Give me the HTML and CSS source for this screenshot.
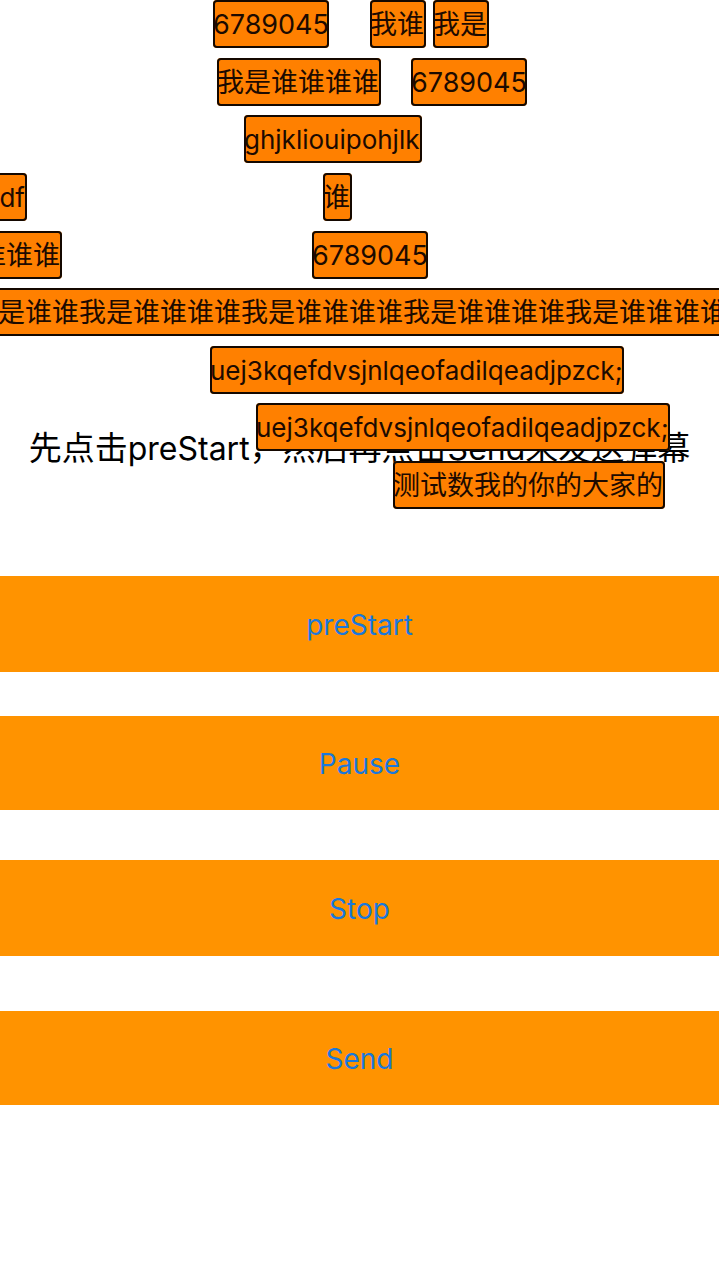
FILE: index.html
```html
<!DOCTYPE html>
<html lang="zh-CN">
<head>
<meta charset="utf-8">
<meta name="viewport" content="width=device-width, initial-scale=1">
<title>弹幕</title>
<link rel="stylesheet" href="styles.css">
</head>
<body>
<main class="screen">
  <section class="stage">
    <p class="hint">先点击<span class="hint-name">preStart</span>，然后再点击<span class="hint-name">Send</span>来发送弹幕</p>
    <div class="tracks">
      <div class="track">
        <span class="bullet" style="left: 213px">6789045</span>
        <span class="bullet bullet-han" style="left: 370px">我谁</span>
        <span class="bullet bullet-han" style="left: 433px">我是</span>
      </div>
      <div class="track">
        <span class="bullet bullet-han" style="left: 217px">我是谁谁谁谁</span>
        <span class="bullet" style="left: 411px">6789045</span>
      </div>
      <div class="track">
        <span class="bullet bullet-latin" style="left: 244px">ghjkliouipohjlk</span>
      </div>
      <div class="track">
        <span class="bullet bullet-latin" style="right: calc(100% - 27px)">asdf</span>
        <span class="bullet bullet-han" style="left: 323px">谁</span>
      </div>
      <div class="track">
        <span class="bullet bullet-han" style="right: calc(100% - 62px)">我是谁谁谁谁</span>
        <span class="bullet" style="left: 312px">6789045</span>
      </div>
      <div class="track">
        <span class="bullet bullet-han" style="left: -29px">我是谁谁我是谁谁谁谁我是谁谁谁谁我是谁谁谁谁我是谁谁谁谁我是谁谁谁谁</span>
      </div>
      <div class="track">
        <span class="bullet bullet-latin" style="left: 210px">uej3kqefdvsjnlqeofadilqeadjpzck;</span>
      </div>
      <div class="track">
        <span class="bullet bullet-latin" style="left: 256px">uej3kqefdvsjnlqeofadilqeadjpzck;</span>
      </div>
      <div class="track">
        <span class="bullet bullet-han" style="left: 393px">测试数我的你的大家的</span>
      </div>
    </div>
  </section>
  <div class="controls">
    <button class="control control-tall" type="button">preStart</button>
    <button class="control" type="button">Pause</button>
    <button class="control control-tall" type="button">Stop</button>
    <button class="control" type="button">Send</button>
  </div>
</main>
</body>
</html>
```

FILE: styles.css
```css
* {
  box-sizing: border-box;
}

body {
  margin: 0;
  background: #fff;
  color: #000;
  font-family: Inter, "Noto Sans CJK SC", sans-serif;
}

.screen {
  min-height: 100vh;
  overflow: hidden;
}

.stage {
  display: grid;
  grid-template-columns: 100%;
  padding-bottom: 67px;
}

.hint,
.tracks {
  grid-area: 1 / 1;
}

.hint {
  align-self: end;
  margin: 0 0 36px;
  font-size: 33px;
  line-height: 48px;
  text-align: center;
  white-space: nowrap;
}

.hint-name {
  font-size: 32px;
}

.tracks {
  position: relative;
  display: flex;
  flex-direction: column;
  justify-content: space-between;
  height: 509px;
}

.track {
  position: relative;
  height: 48px;
}

.bullet {
  position: absolute;
  top: 0;
  padding-top: 2px;
  border-radius: 4px;
  background: #ff8000;
  box-shadow: inset 0 0 0 2px #140800;
  color: #1c0a00;
  font-size: 27px;
  line-height: 46px;
  white-space: nowrap;
}

.bullet-latin {
  padding-right: 2px;
  font-size: 26px;
}

.bullet-han {
  padding-right: 2px;
}

.controls {
  display: grid;
}

.control {
  height: 94px;
  padding: 2px 0 0;
  border: 0;
  background: #ff9300;
  color: #1a78dc;
  font: inherit;
  font-size: 28px;
}

.control-tall {
  height: 96px;
}

.control:nth-child(2) {
  margin-top: 44px;
}

.control:nth-child(3) {
  margin-top: 50px;
}

.control:nth-child(4) {
  margin-top: 55px;
}
```
